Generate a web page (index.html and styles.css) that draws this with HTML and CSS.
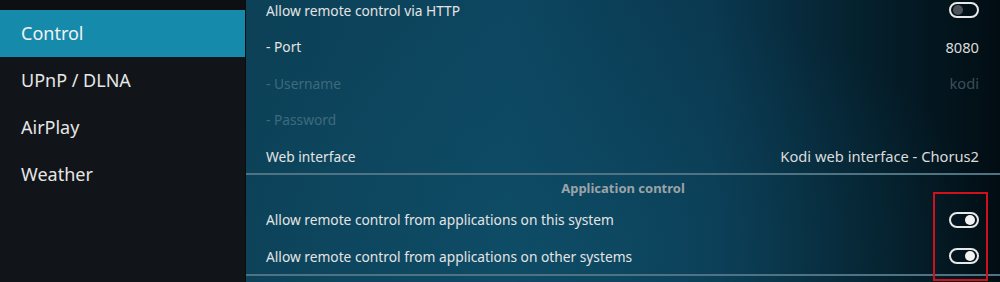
FILE: index.html
```html
<!DOCTYPE html>
<html lang="en">
<head>
    <meta charset="UTF-8">
    <title>Settings - Services</title>
    <link rel="stylesheet" href="styles.css">
</head>
<body>
    <div class="screen">
        <div class="sidebar">
            <div class="menu-item active">Control</div>
            <div class="menu-item">UPnP / DLNA</div>
            <div class="menu-item">AirPlay</div>
            <div class="menu-item">Weather</div>
        </div>
        <div class="content">
            <div class="row">
                <span>Allow remote control via HTTP</span>
                <span class="toggle off"></span>
            </div>
            <div class="row">
                <span>- Port</span>
                <span class="value">8080</span>
            </div>
            <div class="row disabled">
                <span>- Username</span>
                <span class="value">kodi</span>
            </div>
            <div class="row disabled">
                <span>- Password</span>
            </div>
            <div class="row">
                <span>Web interface</span>
                <span class="value">Kodi web interface - Chorus2</span>
            </div>
            <div class="separator"></div>
            <div class="group-title">Application control</div>
            <div class="group">
                <div class="row">
                    <span>Allow remote control from applications on this system</span>
                    <span class="toggle on"></span>
                </div>
                <div class="row">
                    <span>Allow remote control from applications on other systems</span>
                    <span class="toggle on"></span>
                </div>
                <div class="highlight"></div>
            </div>
            <div class="separator last"></div>
        </div>
    </div>
</body>
</html>
```

FILE: styles.css
```css
body {
    margin: 0;
    padding: 0;
    font-family: "Noto Sans", "Open Sans", sans-serif;
    background-color: #0e1013;
    overflow: hidden;
}
.screen {
    display: flex;
    width: 1000px;
    height: 282px;
}
.sidebar {
    width: 245px;
    padding-top: 10px;
    background-color: #111519;
    box-shadow: inset 0 10px 0 #0d0f12;
    border-right: 1px solid #0a0d10;
}
.menu-item {
    height: 47px;
    line-height: 47px;
    padding-left: 21px;
    font-size: 18px;
    color: #e6e6e6;
}
.menu-item.active {
    background-color: #168aab;
    color: #f2f2f2;
}
.content {
    flex: 1;
    background:
        radial-gradient(ellipse 420px 260px at 330px 250px, rgba(16, 84, 110, 0.45), rgba(16, 84, 110, 0) 100%),
        linear-gradient(to right, #0c4157 0%, #0d4660 35%, #0a3850 62%, #05202d 82%, #020d13 100%);
}
.row {
    display: flex;
    justify-content: space-between;
    align-items: center;
    height: 36.5px;
    padding: 0 21px 0 20px;
    font-size: 13.75px;
    color: #e4e4e4;
}
.content > .row:first-child {
    margin-top: -8px;
}
.row.disabled {
    color: #3f6a7c;
}
.value {
    font-size: 14.7px;
    color: #dcdcdc;
}
.row.disabled .value {
    color: #3b4f58;
}
.separator {
    height: 2px;
    background-color: #4f7382;
    margin-top: -2px;
}
.separator.last {
    margin-top: -1px;
}
.group-title {
    height: 27px;
    line-height: 27px;
    text-align: center;
    font-size: 13px;
    font-weight: bold;
    color: #9aa4a8;
}
.group {
    position: relative;
}
.toggle {
    position: relative;
    width: 26px;
    height: 12px;
    border: 2px solid #e8e8e8;
    border-radius: 8px;
}
.toggle::after {
    content: "";
    position: absolute;
    top: 1px;
    width: 10px;
    height: 10px;
    border-radius: 50%;
}
.toggle.off::after {
    left: 2px;
    background-color: #4e5459;
}
.toggle.on::after {
    right: 2px;
    background-color: #f2f2f2;
}
.highlight {
    position: absolute;
    left: 687px;
    top: -10px;
    width: 51px;
    height: 85px;
    border: 2px solid #d0111b;
}
```
